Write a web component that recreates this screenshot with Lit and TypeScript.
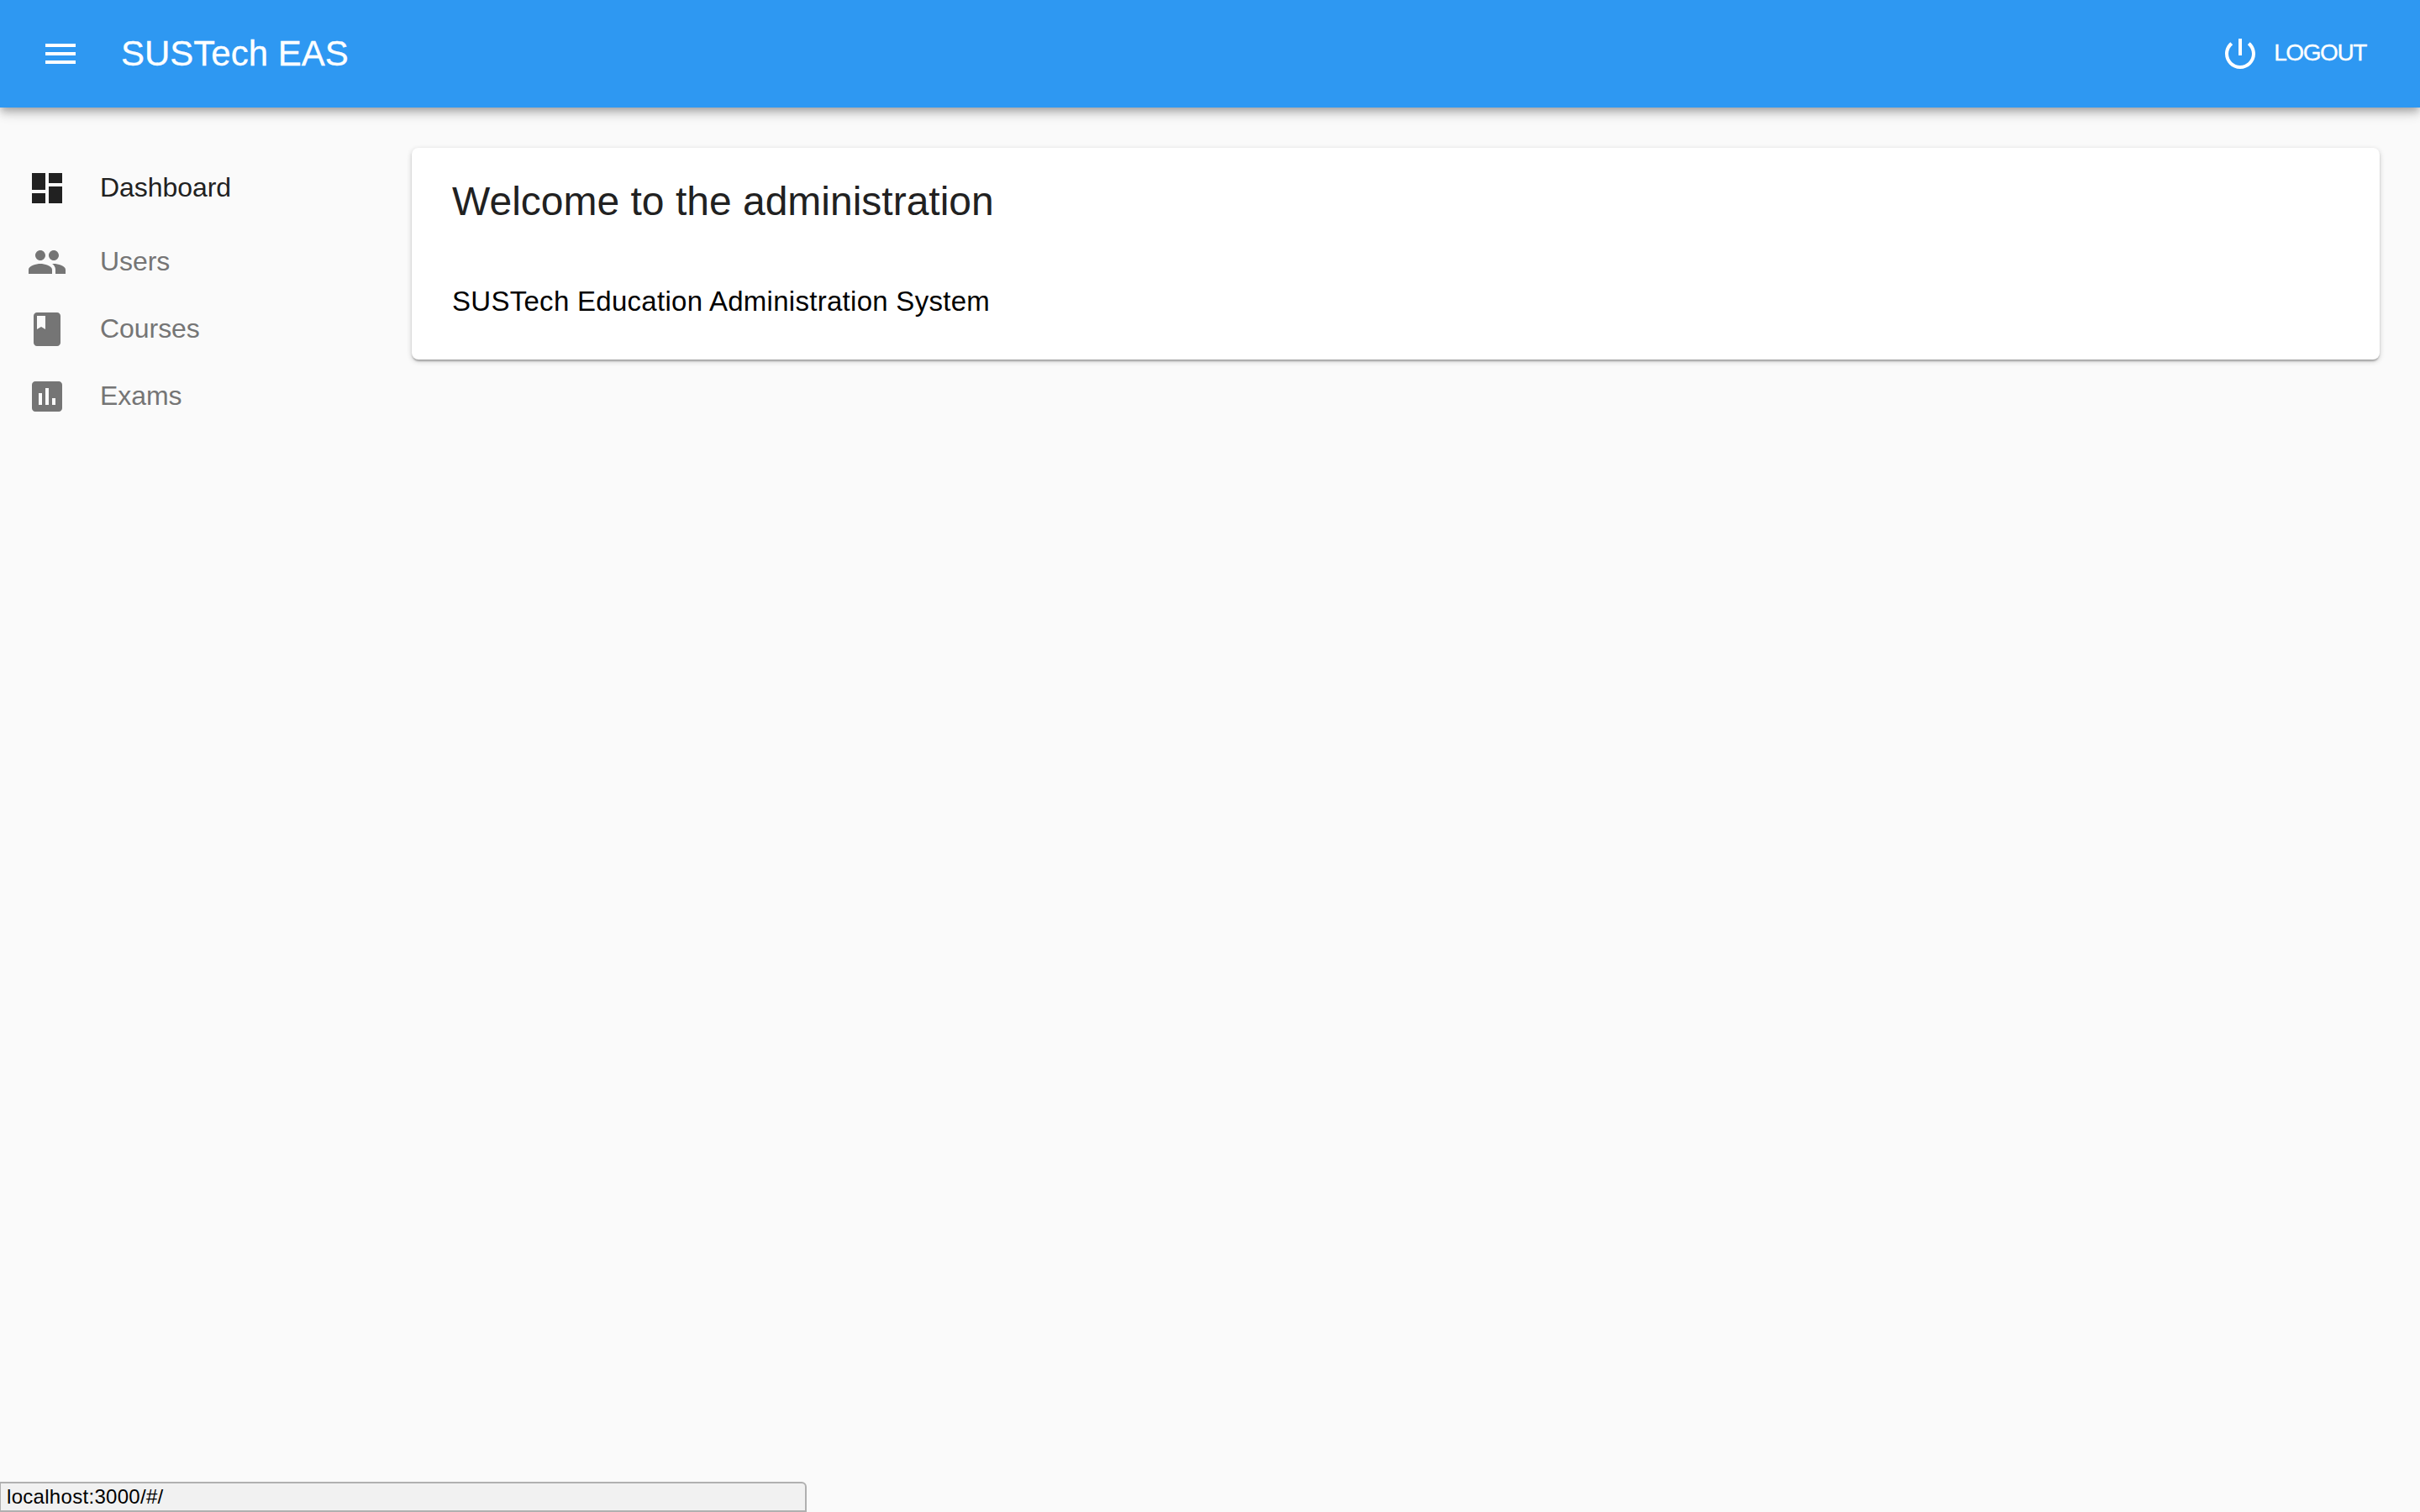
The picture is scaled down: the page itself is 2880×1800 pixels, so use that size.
import { LitElement, html, css, svg } from "lit";
import { customElement } from "lit/decorators.js";

const ICONS = {
  menu: "M3 18h18v-2H3v2zm0-5h18v-2H3v2zm0-7v2h18V6H3z",
  power: "M13 3h-2v10h2V3zm4.83 2.17l-1.42 1.42C17.99 7.86 19 9.81 19 12c0 3.87-3.13 7-7 7s-7-3.13-7-7c0-2.19 1.01-4.14 2.58-5.42L6.17 5.17C4.23 6.82 3 9.26 3 12c0 4.97 4.03 9 9 9s9-4.03 9-9c0-2.74-1.23-5.18-3.17-6.83z",
  dashboard: "M3 13h8V3H3v10zm0 8h8v-6H3v6zm10 0h8V11h-8v10zm0-18v6h8V3h-8z",
  people: "M16 11c1.66 0 2.99-1.34 2.99-3S17.66 5 16 5c-1.66 0-3 1.34-3 3s1.34 3 3 3zm-8 0c1.66 0 2.99-1.34 2.99-3S9.66 5 8 5C6.34 5 5 6.34 5 8s1.34 3 3 3zm0 2c-2.33 0-7 1.17-7 3.5V19h14v-2.5c0-2.33-4.67-3.5-7-3.5zm8 0c-.29 0-.62.02-.97.05 1.16.84 1.97 1.97 1.97 3.45V19h6v-2.5c0-2.33-4.67-3.5-7-3.5z",
  book: "M18 2H6c-1.1 0-2 .9-2 2v16c0 1.1.9 2 2 2h12c1.1 0 2-.9 2-2V4c0-1.1-.9-2-2-2zM6 4h5v8l-2.5-1.5L6 12V4z",
  assessment: "M19 3H5c-1.1 0-2 .9-2 2v14c0 1.1.9 2 2 2h14c1.1 0 2-.9 2-2V5c0-1.1-.9-2-2-2zM9 17H7v-7h2v7zm4 0h-2V7h2v10zm4 0h-2v-4h2v4z",
};

const icon = (d: string) => html`<svg class="icon" viewBox="0 0 24 24" fill="currentColor">${svg`<path d=${d}></path>`}</svg>`;

const MENU = [
  { label: "Dashboard", icon: ICONS.dashboard, active: true },
  { label: "Users", icon: ICONS.people, active: false },
  { label: "Courses", icon: ICONS.book, active: false },
  { label: "Exams", icon: ICONS.assessment, active: false },
];

@customElement("app-root")
export class AppRoot extends LitElement {
  static styles = css`
    :host {
      display: flex;
      flex-direction: column;
      min-height: 100vh;
      background: #fafafa;
      font-family: "Liberation Sans", Arial, sans-serif;
      position: relative;
    }
    .icon { width: 48px; height: 48px; flex: none; display: block; }
    .appbar {
      height: 128px;
      flex: none;
      box-sizing: border-box;
      background: #2e98f2;
      color: #fff;
      display: flex;
      align-items: center;
      padding: 0 64px 0 48px;
      position: relative;
      z-index: 2;
      box-shadow: 0 4px 8px -2px rgba(0,0,0,.2), 0 8px 10px 0 rgba(0,0,0,.14), 0 2px 20px 0 rgba(0,0,0,.12);
    }
    .title {
      margin-left: 48px;
      font-size: 42px;
      font-weight: 400;
      line-height: 46px;
      flex: 1;
      -webkit-text-stroke: 0.3px #fff;
    }
    .logout {
      display: flex;
      align-items: center;
      gap: 16px;
      font-size: 28px;
      line-height: 46px;
      letter-spacing: -1.4px;
      -webkit-text-stroke: 0.3px #fff;
    }
    .logout span { padding-bottom: 2px; }
    .main { display: flex; flex: 1; padding-top: 48px; }
    .side { width: 490px; flex: none; color: #757575; }
    .item {
      display: flex;
      align-items: center;
      height: 80px;
      padding-left: 32px;
      font-size: 32px;
      gap: 39px;
    }
    .item.active { height: 96px; color: #212121; }
    .item span { letter-spacing: -0.05px; padding-bottom: 2px; }
    .content { flex: 1; padding-right: 48px; }
    .card {
      background: #fff;
      border-radius: 8px;
      height: 252px;
      box-sizing: border-box;
      padding: 0 48px;
      box-shadow: 0 2px 6px 0 rgba(0,0,0,.2), 0 2px 2px 0 rgba(0,0,0,.14), 0 4px 2px -2px rgba(0,0,0,.12);
    }
    h1 {
      margin: 0;
      padding-top: 31px;
      font-size: 48px;
      line-height: 66px;
      font-weight: 400;
      color: #212121;
    }
    p {
      margin: 0;
      padding-top: 64px;
      font-size: 33px;
      line-height: 44px;
      color: #000;
      letter-spacing: 0.28px;
    }
    .status {
      position: absolute;
      left: 0;
      bottom: 0;
      width: 960px;
      height: 36px;
      box-sizing: border-box;
      background: #f1f1f1;
      border: 2px solid #b0b0b0;
      border-left-width: 1px;
      border-radius: 0 6px 0 0;
      font-size: 24px;
      line-height: 32px;
      padding-left: 7px;
      color: #000;
      letter-spacing: 0.3px;
    }
  `;

  render() {
    return html`
      <header class="appbar">
        ${icon(ICONS.menu)}
        <div class="title">SUSTech EAS</div>
        <div class="logout">${icon(ICONS.power)}<span>LOGOUT</span></div>
      </header>
      <div class="main">
        <nav class="side">
          ${MENU.map(
            (m) => html`<div class="item ${m.active ? "active" : ""}">${icon(m.icon)}<span>${m.label}</span></div>`
          )}
        </nav>
        <section class="content">
          <div class="card">
            <h1>Welcome to the administration</h1>
            <p>SUSTech Education Administration System</p>
          </div>
        </section>
      </div>
      <div class="status">localhost:3000/#/</div>
    `;
  }
}
